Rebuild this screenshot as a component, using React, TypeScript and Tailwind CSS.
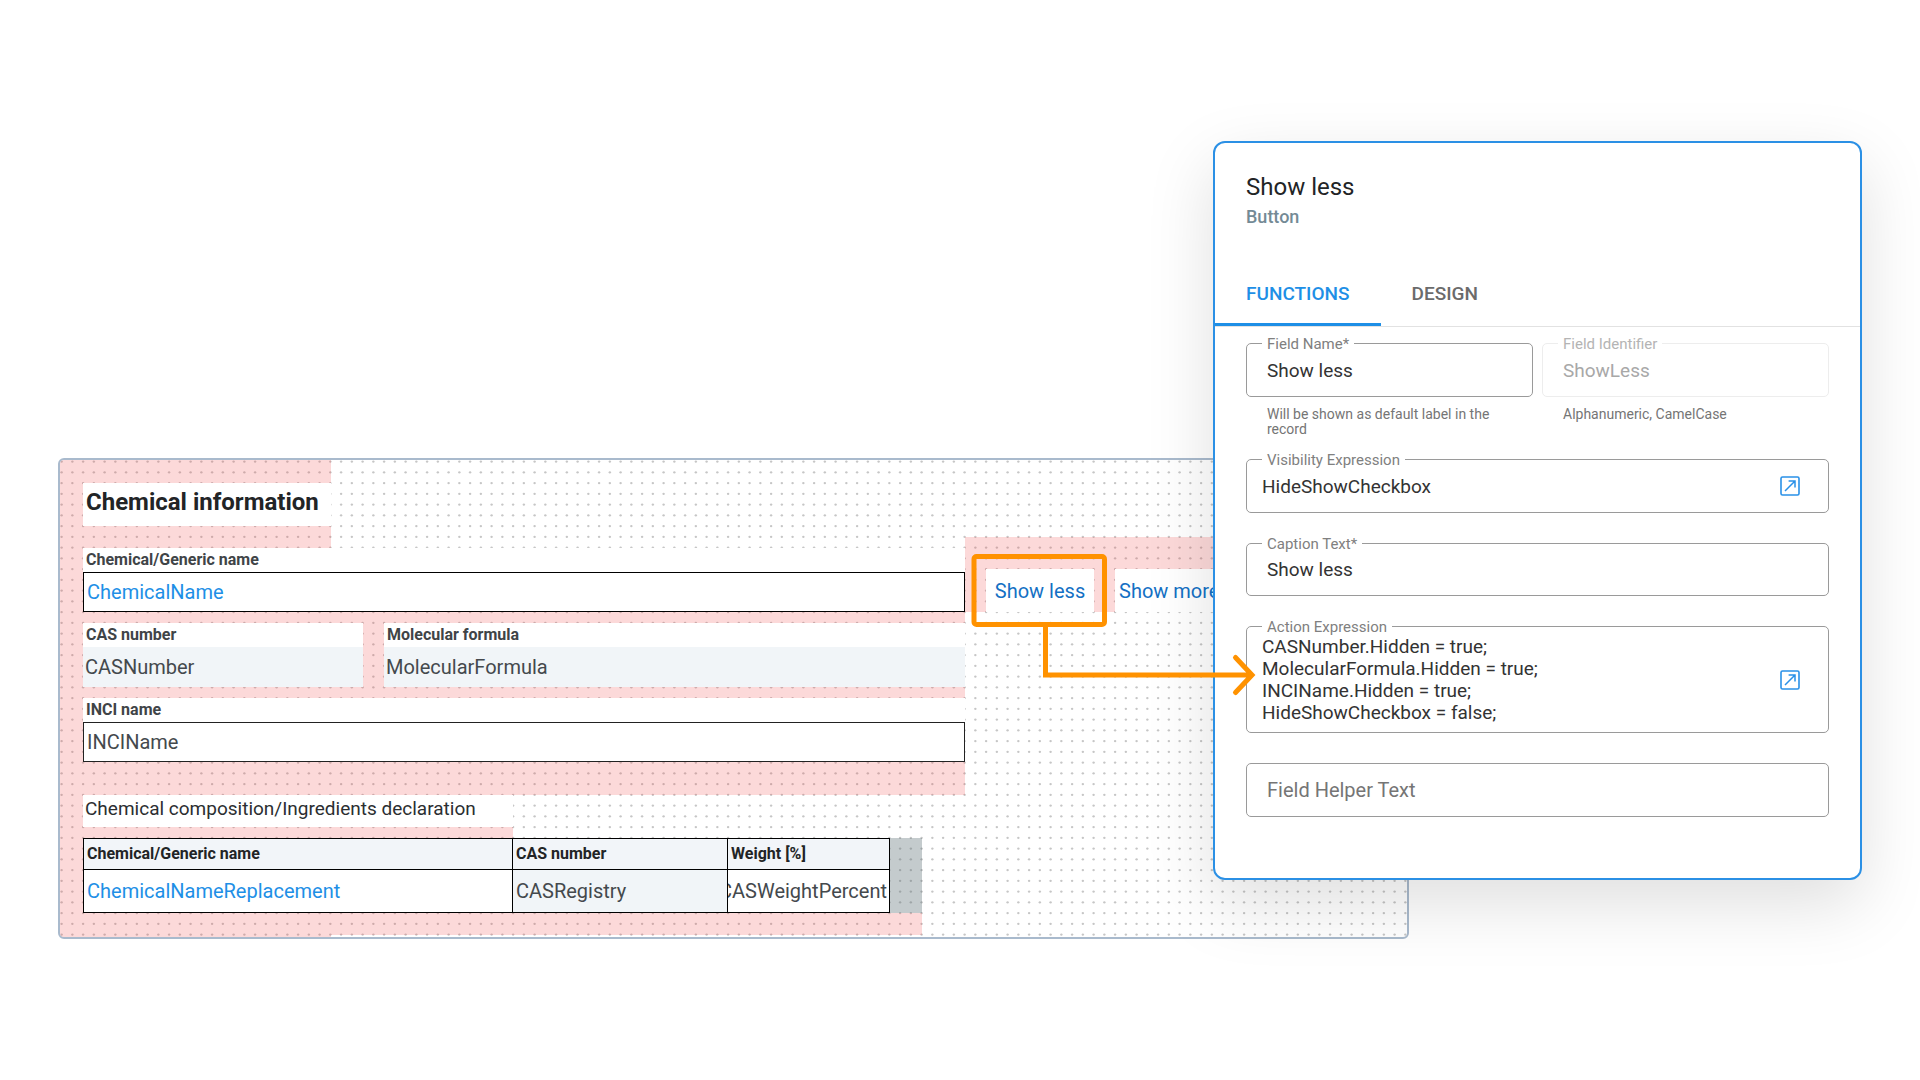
import type { ReactNode } from "react";

const GRID = 10.75;
const DOT_STEPS = [0, 1, 2, 3];

function DotGrid() {
  return (
    <svg className="pointer-events-none absolute inset-0 h-full w-full" aria-hidden="true">
      <defs>
        <pattern id="dots" width="43" height="43" patternUnits="userSpaceOnUse">
          {DOT_STEPS.map((row) =>
            DOT_STEPS.map((col) => (
              <circle key={`${row}-${col}`} cx={1.6 + col * GRID} cy={1.6 + row * GRID} r="1.2" fill="#c6c6c6" />
            )),
          )}
        </pattern>
      </defs>
      <rect width="100%" height="100%" fill="url(#dots)" />
    </svg>
  );
}

type CanvasFieldProps = {
  id: string;
  label: string;
  value: string;
  className: string;
  inputClassName: string;
};

function CanvasField({ id, label, value, className, inputClassName }: CanvasFieldProps) {
  return (
    <div className={`flex flex-col bg-white ${className}`}>
      <label htmlFor={id} className="h-6 px-[3px] text-[16px] leading-6 font-bold text-[#3f4447]">
        {label}
      </label>
      <input
        id={id}
        defaultValue={value}
        className={`h-10 w-full rounded-none text-[20px] outline-none ${inputClassName}`}
      />
    </div>
  );
}

function FormCanvas() {
  return (
    <section className="relative col-start-1 row-start-1 mt-[317px] mr-[453px] flex self-start overflow-hidden rounded-md border-2 border-[#a9bacd] bg-white">
      <DotGrid />
      <div className="relative w-[905px] shrink-0">
        <div className="w-[271px] bg-[#f0414133] pt-[23px] pb-[22px] pl-[23px]">
          <h2 className="h-[43px] bg-white px-[3px] text-[24px] leading-[38px] font-bold whitespace-nowrap text-[#222426]">
            Chemical information
          </h2>
        </div>

        <div className="flex flex-col gap-[11px] bg-[#f0414133] pb-[33px] pl-[23px]">
          <CanvasField
            id="chemical-name"
            label="Chemical/Generic name"
            value="ChemicalName"
            className="w-full"
            inputClassName="border border-black px-[3px] text-[#1e8fe6]"
          />
          <div className="flex gap-[21px]">
            <CanvasField
              id="cas-number"
              label="CAS number"
              value="CASNumber"
              className="w-[280px]"
              inputClassName="bg-[#f1f5f8] px-0.5 text-[#44494d]"
            />
            <CanvasField
              id="molecular-formula"
              label="Molecular formula"
              value="MolecularFormula"
              className="flex-1"
              inputClassName="bg-[#f1f5f8] px-0.5 text-[#44494d]"
            />
          </div>
          <CanvasField
            id="inci-name"
            label="INCI name"
            value="INCIName"
            className="w-full"
            inputClassName="border border-[#222222] px-[3px] text-[#44494d]"
          />
        </div>

        <div className="w-[453px] bg-[#f0414133] pb-[11px] pl-[23px]">
          <h3 className="h-8 bg-white px-0.5 text-[19px] leading-7 whitespace-nowrap text-[#2b2e31]">
            Chemical composition/Ingredients declaration
          </h3>
        </div>

        <div className="flex w-[862px]">
          <div className="w-[23px] bg-[#f0414133]" />
          <table className="w-[806px] table-fixed border-collapse bg-white text-left">
            <colgroup>
              <col className="w-[429px]" />
              <col className="w-[215px]" />
              <col className="w-[162px]" />
            </colgroup>
            <thead>
              <tr className="h-[31px] bg-[#f2f5f9] text-[16px] leading-6 text-[#222426]">
                <th scope="col" className="border border-black px-[3px] py-0 font-bold">Chemical/Generic name</th>
                <th scope="col" className="border border-black px-[3px] py-0 font-bold">CAS number</th>
                <th scope="col" className="border border-black px-[3px] py-0 font-bold">Weight [%]</th>
              </tr>
            </thead>
            <tbody>
              <tr className="h-[43px] text-[20px] leading-7 text-[#44494d]">
                <td className="border border-black px-[3px] py-0 text-[#1e8fe6]">ChemicalNameReplacement</td>
                <td className="border border-black bg-[#f1f5f8] px-[3px] py-0">CASRegistry</td>
                <td className="border border-black p-0">
                  <div className="flex justify-end overflow-hidden pr-0.5">
                    <span>CASWeightPercent</span>
                  </div>
                </td>
              </tr>
            </tbody>
          </table>
          <div className="flex-1 bg-[#566b7059]" />
        </div>
        <div className="h-[22px] w-[862px] bg-[#f0414133]" />
        <div className="h-0.5 w-[271px] bg-[#f0414133]" />
      </div>

      <div className="relative mt-[77px] flex flex-1 flex-col">
        <div className="h-8 bg-[#f0414133]" />
        <div className="flex h-[43px] text-[20px] whitespace-nowrap text-[#1470c4]">
          <div className="w-[21px] bg-[#f0414133]" />
          <button type="button" className="w-[108px] bg-white pt-px">Show less</button>
          <div className="w-[21px] bg-[#f0414133]" />
          <button type="button" className="flex-1 bg-white px-1 pt-px text-left">Show more</button>
        </div>
      </div>
    </section>
  );
}

function OpenIcon() {
  return (
    <svg viewBox="0 0 20 20" className="h-5 w-5" fill="none" stroke="#2a91e8" strokeWidth="1.6" aria-hidden="true">
      <rect x="1" y="1" width="18" height="18" rx="1.5" />
      <path d="M5 15 15 5M8.6 5H15v6.4" strokeWidth="1.5" />
    </svg>
  );
}

type OutlinedProps = { id: string; label: string; disabled?: boolean; children: ReactNode };

function Outlined({ id, label, disabled, children }: OutlinedProps) {
  return (
    <div className={`relative flex items-center rounded-[5px] border ${disabled ? "border-[#ededed]" : "border-[#9a9a9a]"}`}>
      <label
        htmlFor={id}
        className={`absolute -top-2 left-[15px] bg-white px-[5px] text-[15px] leading-4 ${disabled ? "text-[#b4b4b4]" : "text-[#808080]"}`}
      >
        {label}
      </label>
      {children}
    </div>
  );
}

function OpenButton({ label }: { label: string }) {
  return (
    <button type="button" aria-label={label} className="mr-[28px] shrink-0">
      <OpenIcon />
    </button>
  );
}

const expression = `CASNumber.Hidden = true;
MolecularFormula.Hidden = true;
INCIName.Hidden = true;
HideShowCheckbox = false;`;

function PropertiesPanel() {
  return (
    <aside className="relative col-start-1 row-start-1 w-[649px] self-start justify-self-end rounded-xl border-2 border-[#2b90e5] bg-white pb-[61px] shadow-[0_24px_68px_rgba(0,0,0,0.13)]">
      <header className="px-[31px] pt-[30px]">
        <h1 className="text-[24px] leading-7 text-[#222426]">Show less</h1>
        <p className="mt-[5px] text-[18px] leading-[22px] font-medium text-[#748a95]">Button</p>
      </header>

      <div role="tablist" className="mt-[35px] flex border-b border-[#e2e2e2] text-[19px] font-medium">
        <button
          type="button"
          role="tab"
          aria-selected="true"
          className="h-[63px] border-b-3 border-[#1e8fe6] px-[31px] pt-0.5 text-[#1e8fe6]"
        >
          FUNCTIONS
        </button>
        <button
          type="button"
          role="tab"
          aria-selected="false"
          className="h-[63px] border-b-3 border-transparent px-[31px] pt-0.5 text-[#6b6b6b]"
        >
          DESIGN
        </button>
      </div>

      <form className="flex flex-col gap-[30px] px-[31px] pt-4 text-[19px] text-[#333333]">
        <div className="-mb-2 grid grid-cols-2 gap-[9px]">
          <div>
            <Outlined id="field-name" label="Field Name*">
              <input id="field-name" defaultValue="Show less" className="h-[52px] w-full px-5 outline-none" />
            </Outlined>
            <p className="mt-2.5 px-[21px] text-[14px] leading-[15px] text-[#757575]">
              Will be shown as default label in the record
            </p>
          </div>
          <div>
            <Outlined id="field-identifier" label="Field Identifier" disabled>
              <input
                id="field-identifier"
                defaultValue="ShowLess"
                disabled
                className="h-[52px] w-full px-5 text-[#a8a8a8] outline-none"
              />
            </Outlined>
            <p className="mt-2.5 px-[21px] text-[14px] leading-[15px] text-[#757575]">Alphanumeric, CamelCase</p>
          </div>
        </div>

        <Outlined id="visibility" label="Visibility Expression">
          <input id="visibility" defaultValue="HideShowCheckbox" className="h-[52px] min-w-0 flex-1 pl-[15px] outline-none" />
          <OpenButton label="Open visibility expression" />
        </Outlined>

        <Outlined id="caption" label="Caption Text*">
          <input id="caption" defaultValue="Show less" className="h-[51px] w-full px-5 outline-none" />
        </Outlined>

        <Outlined id="action" label="Action Expression">
          <textarea
            id="action"
            rows={4}
            defaultValue={expression}
            className="h-[105px] min-w-0 flex-1 resize-none overflow-hidden pt-[9px] pl-[15px] leading-[22px] outline-none"
          />
          <OpenButton label="Open action expression" />
        </Outlined>

        <input
          aria-label="Field Helper Text"
          placeholder="Field Helper Text"
          className="h-[54px] w-full rounded-[5px] border border-[#9a9a9a] px-5 text-[20px] outline-none placeholder:text-[#757575]"
        />
      </form>
    </aside>
  );
}

function Callout() {
  return (
    <svg
      viewBox="0 0 288 146"
      className="pointer-events-none relative col-start-1 row-start-1 mt-[413px] ml-[913px] h-[146px] w-[288px]"
      fill="none"
      stroke="#ff9200"
      strokeWidth="5"
      aria-hidden="true"
    >
      <rect x="3" y="2.5" width="130.5" height="68" rx="2.5" />
      <path d="M74.5 71V121H281" />
      <path d="M264.5 103.5 281 121 264.5 138.5" strokeLinecap="round" strokeLinejoin="miter" />
    </svg>
  );
}

export default function App() {
  return (
    <main className="grid min-h-screen items-start bg-white px-[58px] pt-[141px] font-['Roboto',sans-serif]">
      <FormCanvas />
      <PropertiesPanel />
      <Callout />
    </main>
  );
}
